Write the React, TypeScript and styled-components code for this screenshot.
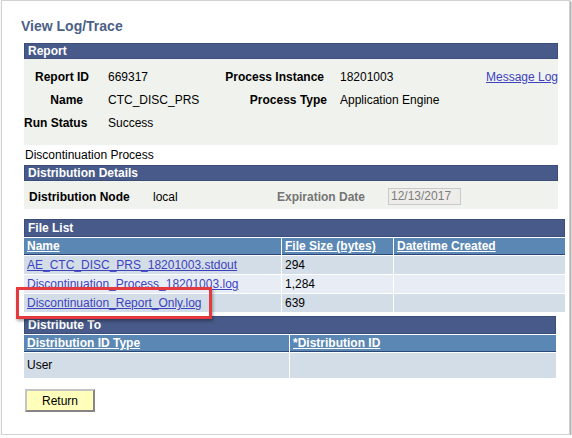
import { Fragment } from 'react';
import styled, { createGlobalStyle } from 'styled-components';

const GlobalStyle = createGlobalStyle`
  html, body {
    margin: 0;
    padding: 0;
    background: #ffffff;
  }

  body {
    font-family: 'Liberation Sans', Arial, sans-serif;
    font-size: 12px;
    color: #000000;
  }
`;

const Frame = styled.div`
  position: relative;
  box-sizing: border-box;
  width: 569px;
  height: 435px;
  margin-left: 1px;
  padding: 0 0 0 22px;
  border: 1px solid #d2d2d2;
  box-shadow: 1px 1px 2px rgba(0, 0, 0, 0.45);
  background: #ffffff;
`;

const Title = styled.h1`
  margin: 15px 0 7px -3px;
  height: 20px;
  line-height: 20px;
  font-size: 14px;
  font-weight: bold;
  color: #4c5f86;
`;

const Section = styled.div<{ $width: number }>`
  width: ${(p) => p.$width}px;
  display: flex;
  flex-direction: column;
`;

const SectionBar = styled.div<{ $height: number }>`
  box-sizing: border-box;
  height: ${(p) => p.$height}px;
  line-height: ${(p) => p.$height - 2}px;
  padding-left: 3px;
  background: #485a89;
  border: 1px solid #3c4d7a;
  color: #ffffff;
  font-weight: bold;
  font-size: 12px;
`;

const InfoPanel = styled.div`
  height: 86px;
  box-sizing: border-box;
  padding-top: 6px;
  background: #f0f2ed;
  display: grid;
  grid-template-columns: 84px 92px 140px 146px 72px;
  grid-auto-rows: 23px;
  align-items: center;
`;

const Label = styled.span<{ $pr?: number; $left?: boolean }>`
  font-weight: bold;
  text-align: ${(p) => (p.$left ? 'left' : 'right')};
  padding-right: ${(p) => p.$pr ?? 0}px;
  white-space: nowrap;
`;

const Value = styled.span`
  white-space: nowrap;
`;

const Link = styled.a`
  color: #3d42bf;
  text-decoration: underline;
  cursor: pointer;
  white-space: nowrap;
`;

const Caption = styled.div`
  height: 20px;
  line-height: 20px;
  padding-left: 1px;
`;

const DetailsPanel = styled.div`
  height: 28px;
  box-sizing: border-box;
  padding: 3px 0 0 5px;
  background: #f0f2ed;
  display: grid;
  grid-template-columns: 124px 124px 111px 73px;
  align-items: center;
`;

const MutedLabel = styled.span`
  font-weight: bold;
  color: #747474;
  white-space: nowrap;
`;

const DateBox = styled.div`
  box-sizing: border-box;
  height: 17px;
  line-height: 15px;
  padding-left: 2px;
  background: #eeedea;
  border: 1px solid #c9c9c9;
  color: #7c7c7c;
`;

const Spacer = styled.div<{ $h: number }>`
  height: ${(p) => p.$h}px;
`;

const Grid = styled.div<{ $cols: string }>`
  display: grid;
  grid-template-columns: ${(p) => p.$cols};
  column-gap: 1px;
  row-gap: 1px;
  padding-top: 1px;
  background: #ffffff;
`;

const HeadCell = styled.div`
  box-sizing: border-box;
  height: 17px;
  line-height: 16px;
  padding-left: 3px;
  background: #5b87b4;
  border-bottom: 1px solid #2c4677;
  color: #ffffff;
  font-weight: bold;
  text-decoration: underline;
  white-space: nowrap;
`;

const Cell = styled.div<{ $alt?: boolean; $h: number }>`
  height: ${(p) => p.$h}px;
  line-height: ${(p) => p.$h}px;
  padding-left: 3px;
  background: ${(p) => (p.$alt ? '#e8edf5' : '#d3dde7')};
  white-space: nowrap;
`;

const Highlight = styled.div`
  position: absolute;
  left: 14px;
  top: 286px;
  box-sizing: border-box;
  width: 196px;
  height: 32px;
  border: 3px solid #e4393e;
  box-shadow: 1px 2px 3px rgba(0, 0, 0, 0.35);
  pointer-events: none;
`;

const ReturnButton = styled.button`
  box-sizing: border-box;
  width: 70px;
  height: 23px;
  margin: 11px 0 0 1px;
  padding: 0;
  background: #ffffbb;
  border: 2px solid;
  border-color: #c4c4c4 #858585 #858585 #c4c4c4;
  font-family: 'Liberation Sans', Arial, sans-serif;
  font-size: 12px;
  color: #000000;
`;

const files = [
  { name: 'AE_CTC_DISC_PRS_18201003.stdout', size: '294' },
  { name: 'Discontinuation_Process_18201003.log', size: '1,284' },
  { name: 'Discontinuation_Report_Only.log', size: '639' },
];

export default function App() {
  return (
    <>
      <GlobalStyle />
      <Frame>
        <Title>View Log/Trace</Title>

        <Section $width={534}>
          <SectionBar $height={16}>Report</SectionBar>
          <InfoPanel>
            <Label $pr={19}>Report ID</Label>
            <Value>669317</Value>
            <Label $pr={16}>Process Instance</Label>
            <Value>18201003</Value>
            <Link>Message Log</Link>

            <Label $pr={25}>Name</Label>
            <Value>CTC_DISC_PRS</Value>
            <Label $pr={13}>Process Type</Label>
            <Value>Application Engine</Value>
            <span />

            <Label $pr={21}>Run Status</Label>
            <Value>Success</Value>
          </InfoPanel>
          <Caption>Discontinuation Process</Caption>
          <SectionBar $height={16}>Distribution Details</SectionBar>
          <DetailsPanel>
            <Label $left>Distribution Node</Label>
            <Value>local</Value>
            <MutedLabel>Expiration Date</MutedLabel>
            <DateBox>12/13/2017</DateBox>
          </DetailsPanel>
        </Section>

        <Spacer $h={10} />

        <Section $width={541}>
          <SectionBar $height={18}>File List</SectionBar>
          <Grid $cols="257px 111px 171px">
            <HeadCell>Name</HeadCell>
            <HeadCell>File Size (bytes)</HeadCell>
            <HeadCell>Datetime Created</HeadCell>
            {files.map((f, i) => (
              <Fragment key={f.name}>
                <Cell $h={18} $alt={i % 2 === 1}>
                  <Link>{f.name}</Link>
                </Cell>
                <Cell $h={18} $alt={i % 2 === 1}>{f.size}</Cell>
                <Cell $h={18} $alt={i % 2 === 1} />
              </Fragment>
            ))}
          </Grid>
        </Section>

        <Spacer $h={4} />

        <Section $width={532}>
          <SectionBar $height={18}>Distribute To</SectionBar>
          <Grid $cols="265px 266px">
            <HeadCell>Distribution ID Type</HeadCell>
            <HeadCell>*Distribution ID</HeadCell>
            <Cell $h={25}>User</Cell>
            <Cell $h={25} />
          </Grid>
        </Section>

        <ReturnButton>Return</ReturnButton>

        <Highlight />
      </Frame>
    </>
  );
}
